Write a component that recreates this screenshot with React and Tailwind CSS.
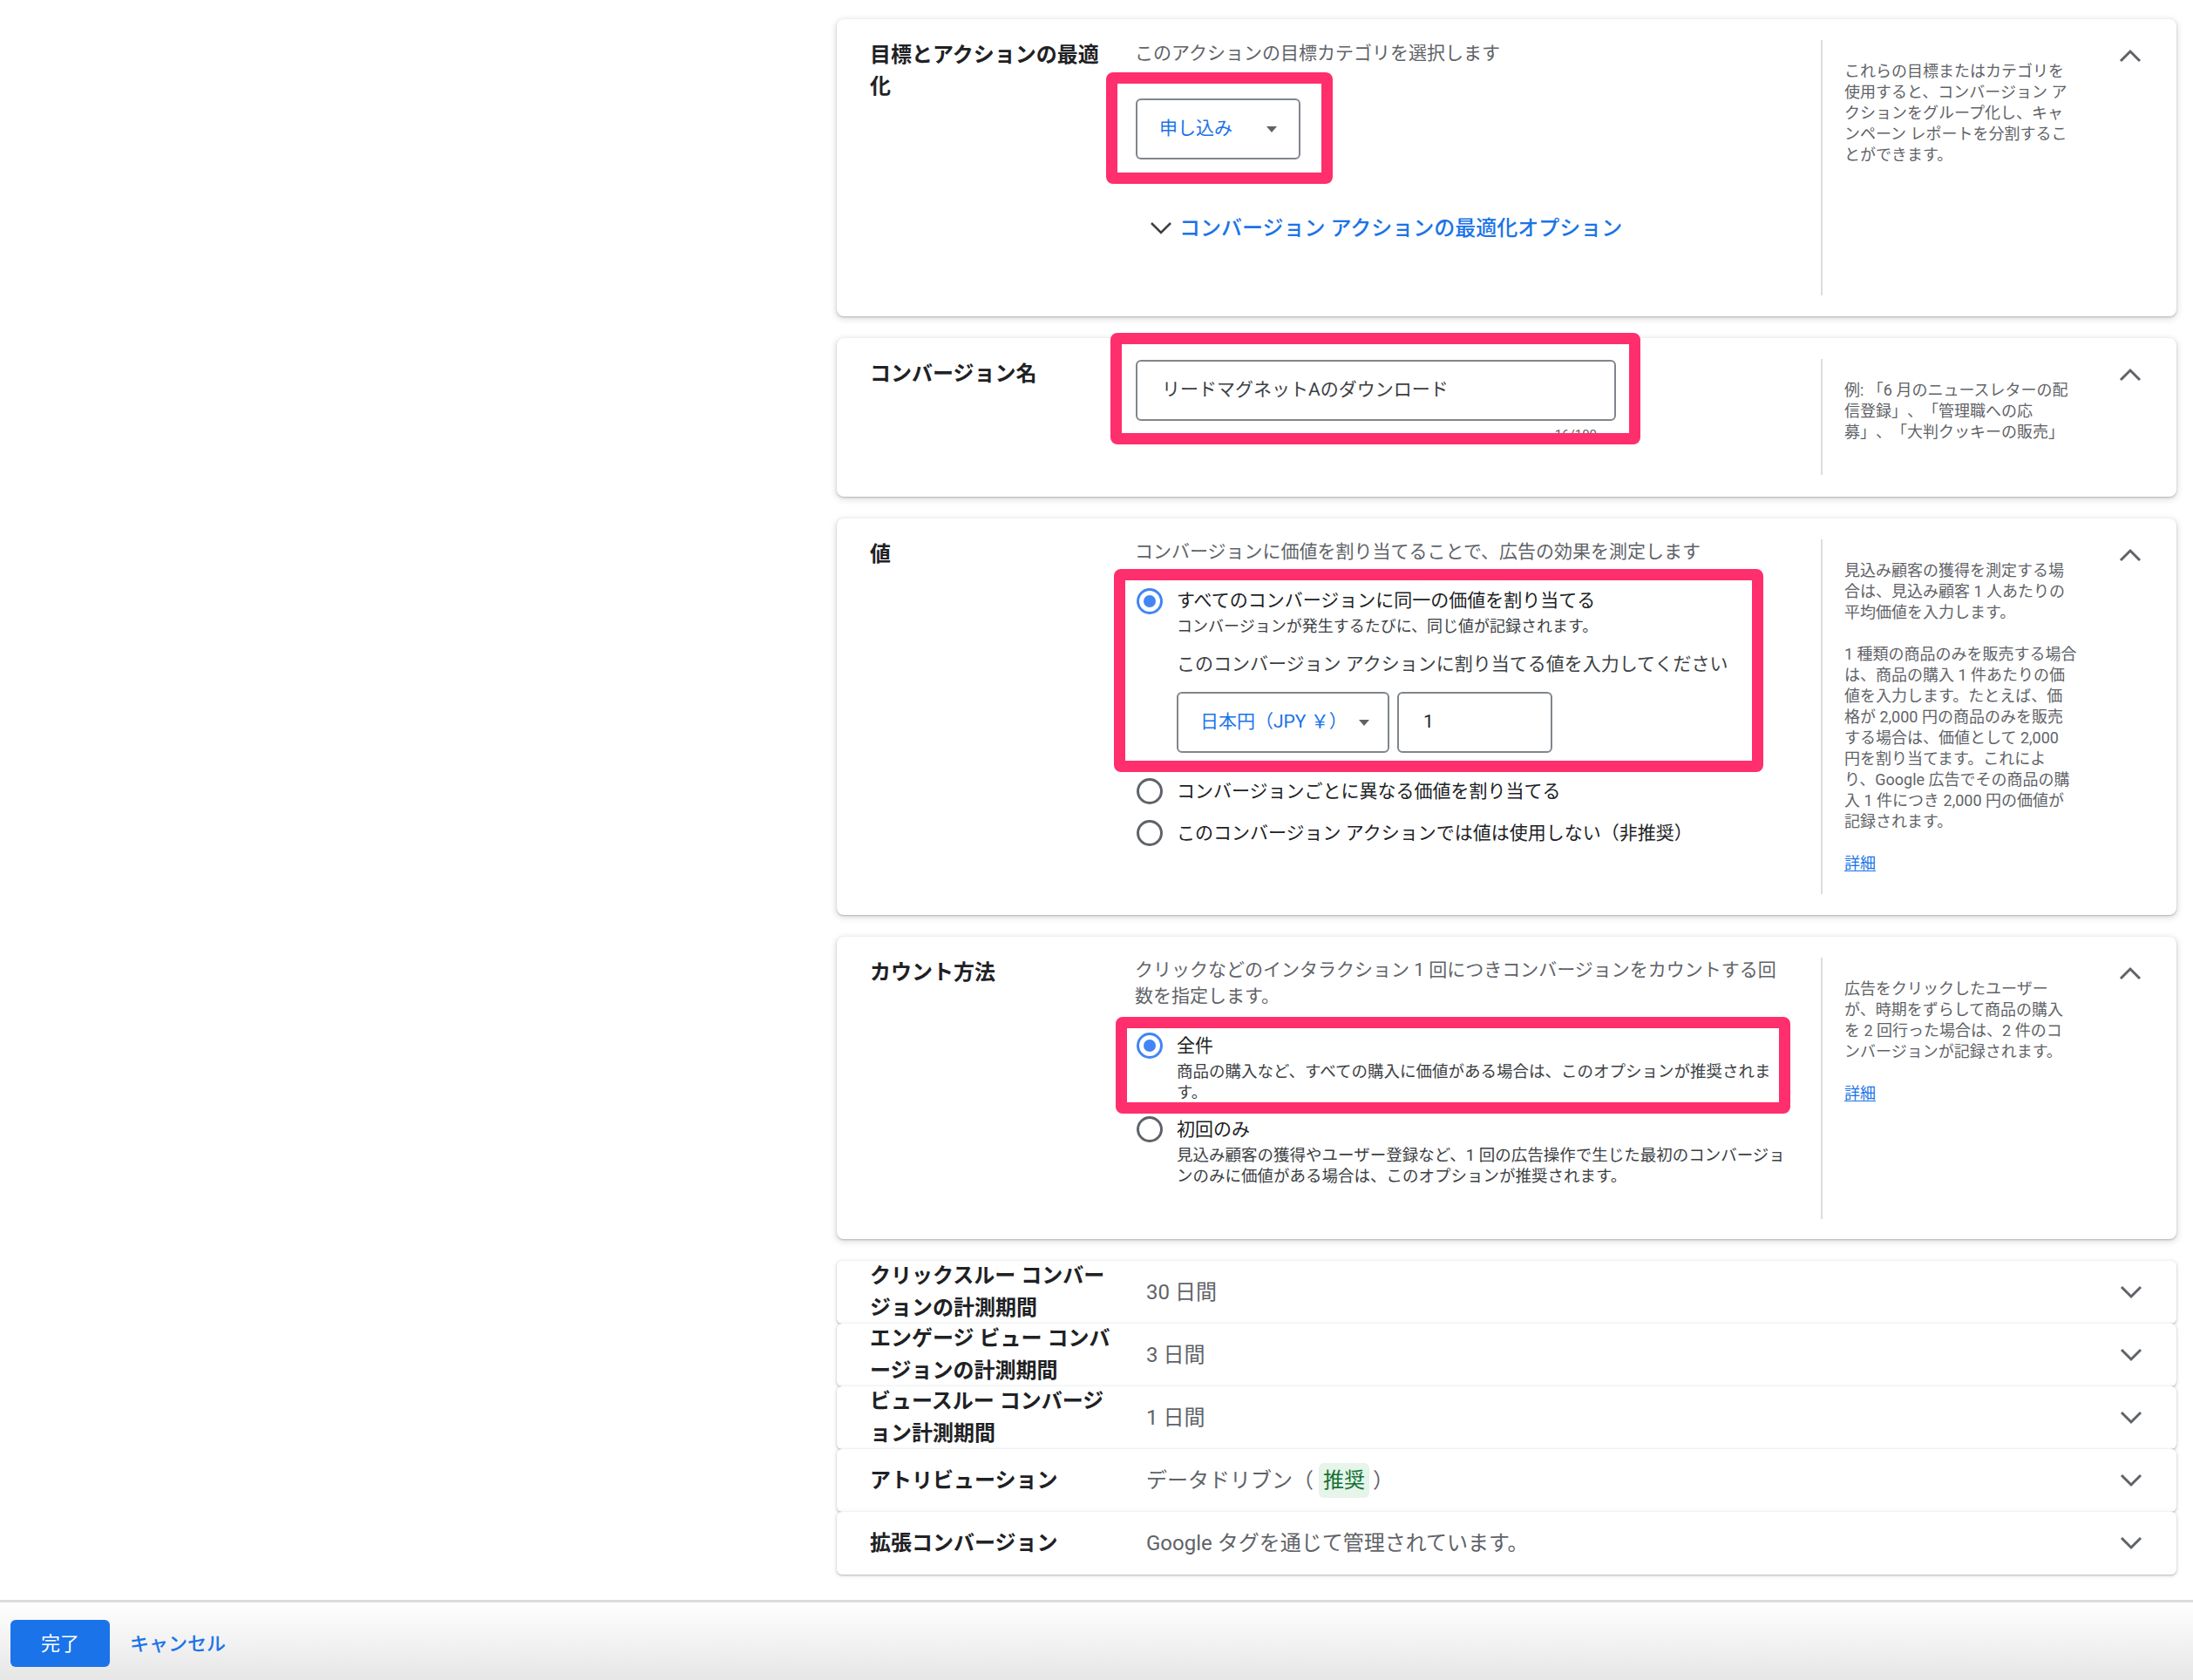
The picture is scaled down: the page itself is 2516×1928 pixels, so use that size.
import React from "react";

const ChevronUp = () => (
  <svg width="26" height="16" viewBox="0 0 26 16" className="block">
    <polyline points="2,14 13,3 24,14" fill="none" stroke="#5f6368" strokeWidth="3" />
  </svg>
);

const ChevronDown = ({ color = "#5f6368", w = 3 }) => (
  <svg width="26" height="16" viewBox="0 0 26 16" className="block">
    <polyline points="2,2 13,13 24,2" fill="none" stroke={color} strokeWidth={w} />
  </svg>
);

const Radio = ({ checked }) =>
  checked ? (
    <span className="flex w-[30px] h-[30px] shrink-0 rounded-full border-[3px] border-[#4285f4] items-center justify-center">
      <span className="block w-[14px] h-[14px] rounded-full bg-[#4285f4]" />
    </span>
  ) : (
    <span className="block w-[30px] h-[30px] shrink-0 rounded-full border-[3px] border-[#5f6368]" />
  );

const Triangle = () => (
  <span className="block w-0 h-0 border-l-[6px] border-r-[6px] border-t-[7px] border-l-transparent border-r-transparent border-t-[#5f6368]" />
);

const Pink = ({ className }) => (
  <div
    className={
      "absolute z-10 pointer-events-none border-[13px] border-[#ff2e6c] rounded-[8px] " + className
    }
  />
);

const Lines = ({ lines }) => (
  <div className="text-[18px] leading-[24px] text-[#5f6368] whitespace-nowrap">
    {lines.map((l, i) =>
      l === "" ? (
        <div key={i} className="h-[24px]" />
      ) : l === "詳細" ? (
        <div key={i}>
          <span className="text-[#1a73e8] underline underline-offset-2">詳細</span>
        </div>
      ) : (
        <div key={i}>{l}</div>
      )
    )}
  </div>
);

const cardCls =
  "relative flex bg-white rounded-[8px] shadow-[0_1px_2px_rgba(60,64,67,0.3),0_2px_6px_2px_rgba(60,64,67,0.15)]";

const Label = ({ children }) => (
  <div className="w-[342px] shrink-0 pl-[38px] pt-[23px]">
    <div className="text-[24px] leading-[36px] font-semibold text-[#202124] whitespace-nowrap">{children}</div>
  </div>
);

const HelpCol = ({ h, lines }) => (
  <div className={"w-[321px] shrink-0 mt-[24px] border-l-2 border-[#dadce0] pl-[25px] pt-[24px] " + h}>
    <Lines lines={lines} />
  </div>
);

const ChevCol = () => (
  <div className="flex-1 pt-[34px] pl-[21px]">
    <ChevronUp />
  </div>
);

const Row = ({ label, children }) => (
  <div className="relative flex items-center h-[72px] bg-white rounded-[6px] shadow-[0_1px_2px_rgba(60,64,67,0.3),0_1px_4px_1px_rgba(60,64,67,0.12)]">
    <div className="w-[355px] shrink-0 pl-[38px] text-[24px] leading-[37px] font-semibold text-[#202124] whitespace-nowrap">
      {label}
    </div>
    <div className="flex-1 text-[24px] text-[#5f6368] flex items-center whitespace-nowrap">{children}</div>
    <div className="mr-[39px]">
      <ChevronDown />
    </div>
  </div>
);

export default function App() {
  return (
    <div className="w-[2516px] h-[1928px] flex flex-col bg-white font-[Roboto,'Noto_Sans_CJK_JP',sans-serif] [text-spacing-trim:space-all] overflow-hidden">
      <div className="h-[1836px] flex overflow-hidden">
        <div className="w-[960px] shrink-0" />
        <div className="w-[1537px] shrink-0 pt-[22px] flex flex-col">
          {/* Card 1 */}
          <section className={cardCls + " h-[341px]"}>
            <Pink className="left-[309px] top-[61px] w-[260px] h-[128px]" />
            <Label>
              目標とアクションの最適
              <br />化
            </Label>
            <div className="w-[787px] shrink-0 pt-[23px]">
              <div className="text-[21px] leading-[32px] text-[#5f6368]">このアクションの目標カテゴリを選択します</div>
              <div className="mt-[36px] ml-[1px] w-[189px] h-[70px] border-2 border-[#80868b] rounded-[6px] flex items-center justify-between pl-[25px] pr-[25px]">
                <span className="text-[21px] text-[#1a73e8]">申し込み</span>
                <Triangle />
              </div>
              <div className="mt-[63px] h-[32px] flex items-center">
                <span className="ml-[17px]">
                  <ChevronDown color="#3c4043" w={2.5} />
                </span>
                <span className="ml-[8px] text-[24px] font-medium text-[#1a73e8] whitespace-nowrap">
                  コンバージョン アクションの最適化オプション
                </span>
              </div>
            </div>
            <HelpCol
              h="h-[293px]"
              lines={[
                "これらの目標またはカテゴリを",
                "使用すると、コンバージョン ア",
                "クションをグループ化し、キャ",
                "ンペーン レポートを分割するこ",
                "とができます。",
              ]}
            />
            <ChevCol />
          </section>

          {/* Card 2 */}
          <section className={cardCls + " h-[182px] mt-[25px]"}>
            <Pink className="left-[314px] top-[-6px] w-[608px] h-[128px]" />
            <Label>コンバージョン名</Label>
            <div className="w-[787px] shrink-0 pt-[25px]">
              <div className="ml-[1px] w-[551px] h-[70px] border-2 border-[#80868b] rounded-[6px] flex items-center pl-[28px] text-[21px] text-[#3c4043]">
                リードマグネットAのダウンロード
              </div>
              <div className="w-[552px] flex justify-end pr-[22px] mt-[6px] text-[15px] leading-[20px] text-[#5f6368]">
                16/100
              </div>
            </div>
            <HelpCol
              h="h-[133px]"
              lines={["例: 「6 月のニュースレターの配", "信登録」、「管理職への応", "募」、「大判クッキーの販売」"]}
            />
            <ChevCol />
          </section>

          {/* Card 3 */}
          <section className={cardCls + " h-[455px] mt-[25px]"}>
            <Pink className="left-[318px] top-[58px] w-[745px] h-[233px]" />
            <Label>値</Label>
            <div className="w-[787px] shrink-0 pt-[22px]">
              <div className="text-[21px] leading-[32px] text-[#5f6368] whitespace-nowrap">
                コンバージョンに価値を割り当てることで、広告の効果を測定します
              </div>
              <div className="mt-[25px] flex items-start">
                <span className="ml-[2px] mt-[1px]">
                  <Radio checked />
                </span>
                <div className="ml-[16px]">
                  <div className="text-[21px] leading-[30px] text-[#202124] whitespace-nowrap">
                    すべてのコンバージョンに同一の価値を割り当てる
                  </div>
                  <div className="mt-[2px] text-[18px] leading-[26px] text-[#3c4043] whitespace-nowrap">
                    コンバージョンが発生するたびに、同じ値が記録されます。
                  </div>
                  <div className="mt-[14px] text-[21px] leading-[32px] text-[#3c4043] whitespace-nowrap">
                    このコンバージョン アクションに割り当てる値を入力してください
                  </div>
                  <div className="mt-[16px] flex gap-[9px]">
                    <div className="w-[244px] h-[70px] border-2 border-[#80868b] rounded-[6px] flex items-center justify-between pl-[25px] pr-[21px]">
                      <span className="text-[21px] text-[#1a73e8] whitespace-nowrap">日本円（JPY ￥）</span>
                      <Triangle />
                    </div>
                    <div className="w-[178px] h-[70px] border-2 border-[#80868b] rounded-[6px] flex items-center pl-[28px] text-[21px] text-[#202124]">
                      1
                    </div>
                  </div>
                </div>
              </div>
              <div className="mt-[29px] flex items-center">
                <span className="ml-[2px]">
                  <Radio />
                </span>
                <span className="ml-[16px] text-[21px] leading-[30px] text-[#202124] whitespace-nowrap">
                  コンバージョンごとに異なる価値を割り当てる
                </span>
              </div>
              <div className="mt-[18px] flex items-center">
                <span className="ml-[2px]">
                  <Radio />
                </span>
                <span className="ml-[16px] text-[21px] leading-[30px] text-[#202124] whitespace-nowrap">
                  このコンバージョン アクションでは値は使用しない（非推奨）
                </span>
              </div>
            </div>
            <HelpCol
              h="h-[407px]"
              lines={[
                "見込み顧客の獲得を測定する場",
                "合は、見込み顧客 1 人あたりの",
                "平均価値を入力します。",
                "",
                "1 種類の商品のみを販売する場合",
                "は、商品の購入 1 件あたりの価",
                "値を入力します。たとえば、価",
                "格が 2,000 円の商品のみを販売",
                "する場合は、価値として 2,000",
                "円を割り当てます。これによ",
                "り、Google 広告でその商品の購",
                "入 1 件につき 2,000 円の価値が",
                "記録されます。",
                "",
                "詳細",
              ]}
            />
            <ChevCol />
          </section>

          {/* Card 4 */}
          <section className={cardCls + " h-[347px] mt-[25px]"}>
            <Pink className="left-[320px] top-[92px] w-[774px] h-[111px]" />
            <Label>カウント方法</Label>
            <div className="w-[787px] shrink-0 pt-[23px]">
              <div className="text-[21px] leading-[30px] text-[#5f6368] whitespace-nowrap">
                クリックなどのインタラクション 1 回につきコンバージョンをカウントする回
                <br />
                数を指定します。
              </div>
              <div className="mt-[27px] flex items-start">
                <span className="ml-[2px]">
                  <Radio checked />
                </span>
                <div className="ml-[16px]">
                  <div className="text-[21px] leading-[30px] text-[#202124]">全件</div>
                  <div className="mt-[3px] text-[18.5px] leading-[24px] text-[#3c4043] whitespace-nowrap">
                    商品の購入など、すべての購入に価値がある場合は、このオプションが推奨されま
                    <br />
                    す。
                  </div>
                </div>
              </div>
              <div className="mt-[15px] flex items-start">
                <span className="ml-[2px]">
                  <Radio />
                </span>
                <div className="ml-[16px]">
                  <div className="text-[21px] leading-[30px] text-[#202124]">初回のみ</div>
                  <div className="mt-[3px] text-[18.5px] leading-[24px] text-[#3c4043] whitespace-nowrap">
                    見込み顧客の獲得やユーザー登録など、1 回の広告操作で生じた最初のコンバージョ
                    <br />
                    ンのみに価値がある場合は、このオプションが推奨されます。
                  </div>
                </div>
              </div>
            </div>
            <HelpCol
              h="h-[300px]"
              lines={[
                "広告をクリックしたユーザー",
                "が、時期をずらして商品の購入",
                "を 2 回行った場合は、2 件のコ",
                "ンバージョンが記録されます。",
                "",
                "詳細",
              ]}
            />
            <ChevCol />
          </section>

          {/* Collapsed rows */}
          <div className="mt-[25px] flex flex-col">
            <Row
              label={
                <>
                  クリックスルー コンバー
                  <br />
                  ジョンの計測期間
                </>
              }
            >
              30 日間
            </Row>
            <Row
              label={
                <>
                  エンゲージ ビュー コンバ
                  <br />
                  ージョンの計測期間
                </>
              }
            >
              3 日間
            </Row>
            <Row
              label={
                <>
                  ビュースルー コンバージ
                  <br />
                  ョン計測期間
                </>
              }
            >
              1 日間
            </Row>
            <Row label="アトリビューション">
              データドリブン（
              <span className="ml-[6px] mr-[4px] px-[5px] py-[2px] rounded-[6px] bg-[#e6f4ea] text-[#137333]">推奨</span>）
            </Row>
            <Row label="拡張コンバージョン">Google タグを通じて管理されています。</Row>
          </div>
        </div>
      </div>

      {/* Footer */}
      <div className="h-[92px] shrink-0 border-t-[3px] border-[#dadce0] bg-linear-to-b from-white to-[#e6e6e6] flex items-start pt-[20px] pl-[12px]">
        <button className="w-[114px] h-[54px] rounded-[6px] bg-[#1a73e8] text-white text-[22px] flex items-center justify-center">
          完了
        </button>
        <span className="ml-[23px] h-[54px] flex items-center text-[22px] font-medium text-[#1a73e8]">キャンセル</span>
      </div>
    </div>
  );
}
